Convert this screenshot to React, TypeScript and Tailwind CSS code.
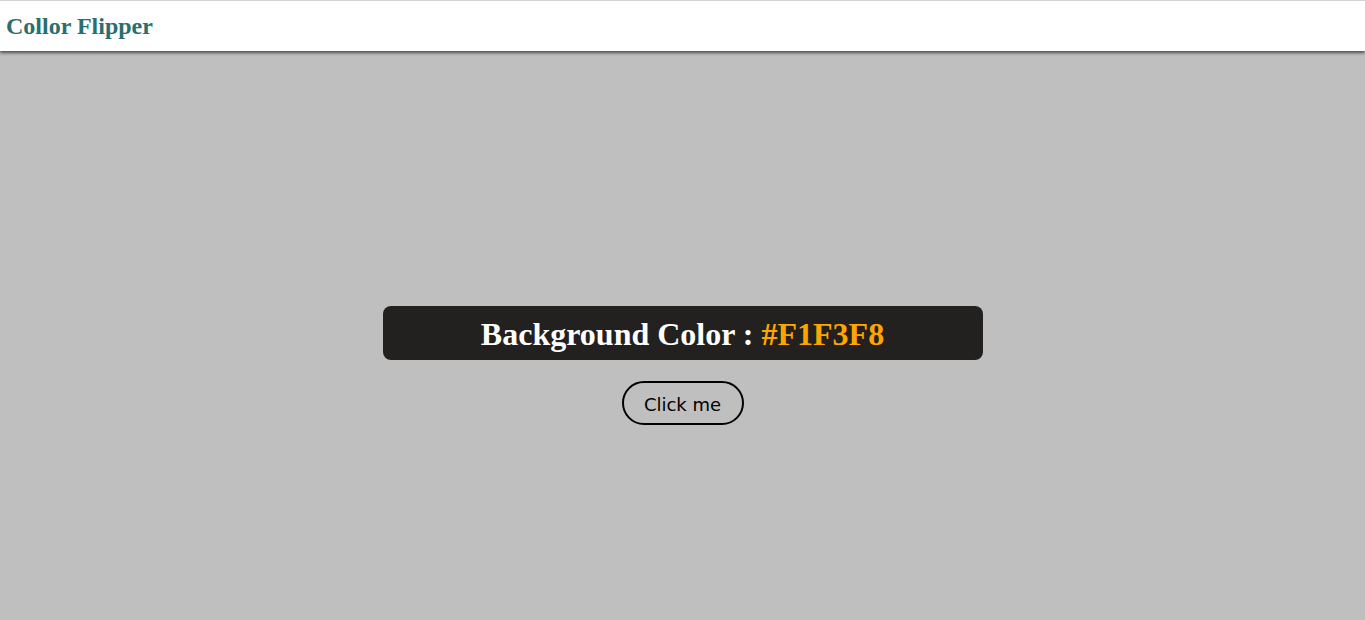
import { useState } from "react";

const colors = ["#F1F3F8", "#BFBFBF", "#FFA500", "#2A6F6F"];

export default function App() {
  const [hex, setHex] = useState("#F1F3F8");

  return (
    <div className="min-h-screen bg-[#bfbfbf] flex flex-col">
      <nav className="h-[51px] bg-white border-t border-[#d3d3d3] shadow-[0_2px_3px_rgba(0,0,0,0.6)] flex items-center px-[6px]">
        <h1 className="font-['Liberation_Serif',serif] font-bold text-[24px] text-[#2a6f6f]">
          Collor Flipper
        </h1>
      </nav>

      <main className="flex flex-col items-center pt-[255px]">
        <div className="w-[600px] h-[54px] rounded-lg bg-[#222120] flex items-center justify-center">
          <h2 className="font-['Liberation_Serif',serif] font-bold text-[32px] leading-none text-white pt-[2px]">
            Background Color : <span className="text-[#ffa500]">{hex}</span>
          </h2>
        </div>
        <button
          onClick={() => setHex(colors[Math.floor(Math.random() * colors.length)])}
          className="mt-[21px] w-[122px] h-[44px] rounded-full border-2 border-black font-['DejaVu_Sans',sans-serif] text-[18px] text-black pt-[3px]"
        >
          Click me
        </button>
      </main>
    </div>
  );
}
